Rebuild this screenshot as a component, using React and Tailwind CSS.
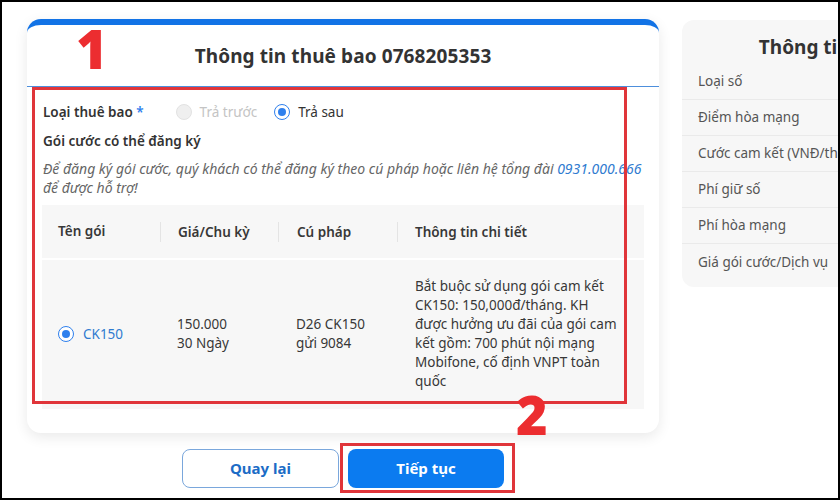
import React from "react";

const FONT = { fontFamily: '"Noto Sans", "Open Sans", sans-serif' };

function Radio({ checked, disabled }) {
  if (disabled) {
    return <span className="inline-block w-[16px] h-[16px] rounded-full border border-[#e2e2e2] bg-[#efefef]" />;
  }
  return (
    <span className="inline-flex items-center justify-center w-[16px] h-[16px] rounded-full border border-[#2f80ed] bg-white">
      {checked && <span className="w-[8px] h-[8px] rounded-full bg-[#2f80ed]" />}
    </span>
  );
}

const summaryRows = [
  "Loại số",
  "Điểm hòa mạng",
  "Cước cam kết (VNĐ/tháng)",
  "Phí giữ số",
  "Phí hòa mạng",
  "Giá gói cước/Dịch vụ",
];

export default function App() {
  return (
    <div
      className="relative w-[840px] h-[500px] overflow-hidden bg-white border-2 border-black"
      style={FONT}
    >
      <div className="flex items-start pl-[25px] pt-[17px] gap-[23px]">
        {/* Left column: subscriber card + actions */}
        <div className="flex flex-col items-center w-[632px] shrink-0">
          <div className="w-full bg-white rounded-[14px] border-t-[6px] border-[#1273e6] shadow-[0_4px_14px_rgba(0,0,0,0.09)]">
            <div className="h-[62px] flex items-center justify-center border-b border-[#4d8fdc]">
              <h1 className="text-[19px] font-bold text-[#333] tracking-[0.1px] mt-[1px]">
                Thông tin thuê bao 0768205353
              </h1>
            </div>

            <div className="pt-[15px] pb-[24px]">
              <div className="px-[16px]">
                <div className="flex items-center h-[20px] text-[13.5px]">
                  <span className="font-semibold text-[#333]">
                    Loại thuê bao <span className="text-[#2f80ed]">*</span>
                  </span>
                  <label className="flex items-center gap-[8px] ml-[32px] text-[#c4c4c4]">
                    <Radio disabled />
                    Trả trước
                  </label>
                  <label className="flex items-center gap-[8px] ml-[17px] text-[#333]">
                    <Radio checked />
                    Trả sau
                  </label>
                </div>
                <p className="mt-[9px] text-[13.5px] font-semibold text-[#333] leading-[20px]">
                  Gói cước có thể đăng ký
                </p>
                <p className="mt-[8px] text-[14px] italic text-[#666] leading-[19px]">
                  Để đăng ký gói cước, quý khách có thể đăng ký theo cú pháp hoặc liên hệ tổng đài{" "}
                  <span className="text-[#2f7bd0]">0931.000.666</span>
                  <br />
                  để được hỗ trợ!
                </p>
              </div>

              {/* Packages table */}
              <div className="mx-[15px] mt-[8px] bg-[#f7f7f7] text-[13.5px] text-[#383838]">
                <div className="grid grid-cols-[118px_118px_119px_1fr] h-[55px] items-center border-b-2 border-white font-semibold">
                  <div className="pl-[16px]">Tên gói</div>
                  <div className="pl-[17px] border-l border-[#e4e4e4] leading-[20px]">Giá/Chu kỳ</div>
                  <div className="pl-[18px] border-l border-[#e4e4e4] leading-[20px]">Cú pháp</div>
                  <div className="pl-[17px] border-l border-[#e4e4e4] leading-[20px]">Thông tin chi tiết</div>
                </div>
                <div className="grid grid-cols-[118px_118px_119px_1fr] items-center pt-[17px] pb-[18px] leading-[19px]">
                  <label className="flex items-center gap-[9px] pl-[16px] text-[#2f7bd0]">
                    <Radio checked />
                    CK150
                  </label>
                  <div className="pl-[17px]">
                    150.000
                    <br />
                    30 Ngày
                  </div>
                  <div className="pl-[18px]">
                    D26 CK150
                    <br />
                    gửi 9084
                  </div>
                  <div className="pl-[18px]">
                    Bắt buộc sử dụng gói cam kết
                    <br />
                    CK150: 150,000đ/tháng. KH
                    <br />
                    được hưởng ưu đãi của gói cam
                    <br />
                    kết gồm: 700 phút nội mạng
                    <br />
                    Mobifone, cố định VNPT toàn
                    <br />
                    quốc
                  </div>
                </div>
              </div>
            </div>
          </div>

          <div className="flex gap-[9px] mt-[16px]">
            <button className="w-[157px] h-[39px] rounded-[8px] border border-[#7aa7dc] bg-white text-[15px] font-bold text-[#1c6cc6]">
              Quay lại
            </button>
            <button className="w-[156px] h-[39px] rounded-[8px] bg-[#0b7bf0] text-[15px] font-bold text-white">
              Tiếp tục
            </button>
          </div>
        </div>

        {/* Right column: summary */}
        <div className="w-[340px] shrink-0 mt-[1px] bg-[#f7f7f7] rounded-[12px] pb-[7px]">
          <h2 className="pt-[16px] pb-[6px] text-center text-[19px] font-bold text-[#333] leading-[22px]">
            Thông tin đơn hàng
          </h2>
          {summaryRows.map((r, i) => (
            <div
              key={r}
              className={`h-[36px] flex items-center pl-[16px] text-[13.5px] text-[#555] ${
                i < summaryRows.length - 1 ? "border-b border-[#eaeaea]" : ""
              }`}
            >
              {r}
            </div>
          ))}
        </div>
      </div>

      {/* Annotations */}
      <div className="absolute left-[30px] top-[85px] w-[595px] h-[317px] border-[3px] border-[#e0353a]" />
      <div className="absolute left-[338px] top-[441px] w-[175px] h-[50px] border-[3px] border-[#e0353a]" />
      <span className="absolute left-[74px] top-[19px] text-[54px] font-black text-[#ec2d30] leading-none">1</span>
      <span className="absolute left-[514px] top-[385px] text-[54px] font-black text-[#ec2d30] leading-none">2</span>
    </div>
  );
}
